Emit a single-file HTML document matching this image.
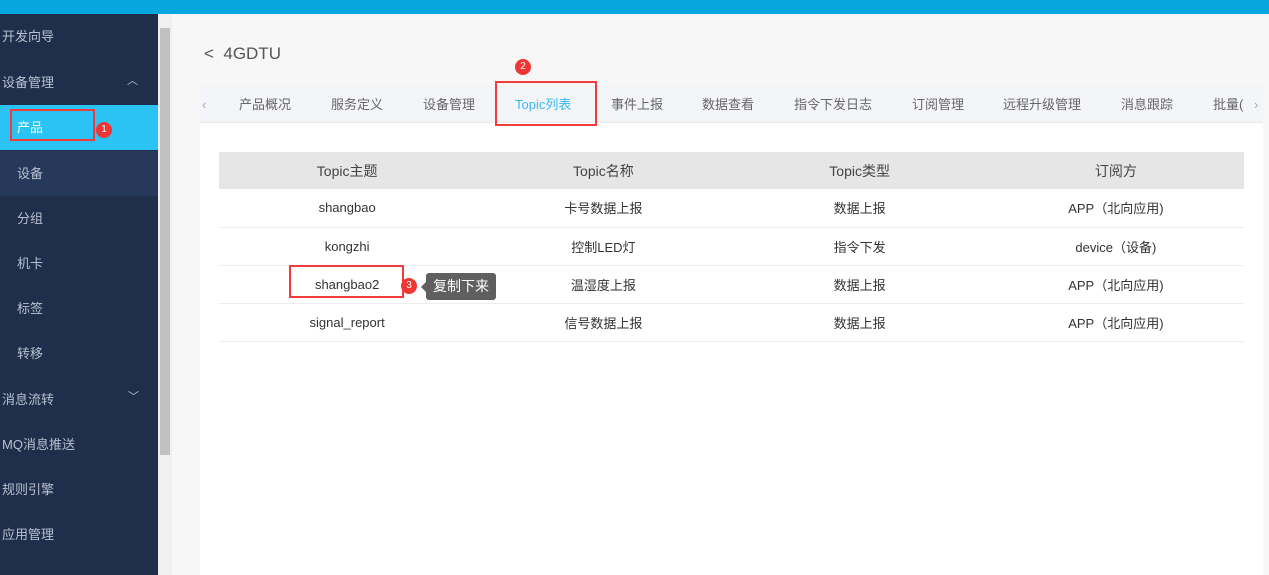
<!DOCTYPE html>
<html><head><meta charset="utf-8"><style>
*{margin:0;padding:0;box-sizing:border-box}
body{width:1269px;height:575px;overflow:hidden;background:#f7f7f7;font-family:"Liberation Sans","Noto Sans CJK SC",sans-serif;position:relative}
.top{position:absolute;left:0;top:0;width:1269px;height:14px;background:#05a7de}
.side{position:absolute;left:0;top:14px;width:158px;height:561px;background:#1f2e4a}
.it{position:absolute;left:0;width:158px;height:45px;line-height:45px;font-size:13px;color:#b7c0cf;padding-left:2px}
.sub{padding-left:17px}
.sb{position:absolute;left:158px;top:14px;width:14px;height:561px;background:#f0f0f0}
.thumb{position:absolute;left:160px;top:28px;width:10px;height:427px;background:#c1c1c1}
.red{position:absolute;border:2px solid #f23b3b}
.badge{position:absolute;width:16px;height:16px;border-radius:8px;background:#f03535;color:#fff;font-size:10px;text-align:center;line-height:16px}
.tabs{position:absolute;left:200px;top:86px;width:1063px;height:37px;background:#f4f5f8;border-bottom:1px solid #e8eaee}
.tab{position:absolute;top:0;line-height:37px;font-size:13px;color:#666}
.panel{position:absolute;left:200px;top:123px;width:1063px;height:452px;background:#fff}
table{position:absolute;left:219px;top:152px;width:1025px;border-collapse:collapse;font-size:13px;color:#333;table-layout:fixed}
th{background:#e6e6e6;height:37px;font-weight:normal;font-size:14px;color:#444;width:256px}
td{height:38px;text-align:center;border-bottom:1px solid #ececec}
</style></head><body>
<div class="top"></div>
<div class="side">
<div class="it" style="top:0">开发向导</div>
<div class="it" style="top:46px">设备管理<span style="position:absolute;left:127px;top:-1px;font-size:11px">︿</span></div>
<div class="it sub" style="top:91px;background:#2bc3f3;color:#fff">产品</div>
<div class="it sub" style="top:137px;background:#26395b">设备</div>
<div class="it sub" style="top:182px">分组</div>
<div class="it sub" style="top:227px">机卡</div>
<div class="it sub" style="top:272px">标签</div>
<div class="it sub" style="top:317px">转移</div>
<div class="it" style="top:363px">消息流转<span style="position:absolute;left:128px;top:-2px;font-size:11px">﹀</span></div>
<div class="it" style="top:408px">MQ消息推送</div>
<div class="it" style="top:453px">规则引擎</div>
<div class="it" style="top:498px">应用管理</div>
</div>
<div class="red" style="left:10px;top:109px;width:85px;height:32px"></div>
<div class="badge" style="left:96px;top:122px">1</div>
<div class="sb"></div><div class="thumb"></div>
<div style="position:absolute;left:204px;top:44px;font-size:17px;color:#555">&lt;&nbsp; 4GDTU</div>
<div class="tabs">
<div class="tab" style="left:2px;color:#aaa">‹</div>
<div class="tab" style="left:39px">产品概况</div>
<div class="tab" style="left:131px">服务定义</div>
<div class="tab" style="left:223px">设备管理</div>
<div class="tab" style="left:315px;color:#3ab8ef">Topic列表</div>
<div class="tab" style="left:411px">事件上报</div>
<div class="tab" style="left:502px">数据查看</div>
<div class="tab" style="left:594px">指令下发日志</div>
<div class="tab" style="left:712px">订阅管理</div>
<div class="tab" style="left:803px">远程升级管理</div>
<div class="tab" style="left:921px">消息跟踪</div>
<div class="tab" style="left:1013px">批量(</div>
<div class="tab" style="left:1054px;color:#aaa">›</div>
</div>
<div class="panel"></div>
<div class="red" style="left:495px;top:81px;width:102px;height:45px"></div>
<div class="badge" style="left:515px;top:59px">2</div>
<table>
<tr><th>Topic主题</th><th>Topic名称</th><th>Topic类型</th><th>订阅方</th></tr>
<tr><td>shangbao</td><td>卡号数据上报</td><td>数据上报</td><td>APP（北向应用)</td></tr>
<tr><td>kongzhi</td><td>控制LED灯</td><td>指令下发</td><td>device（设备)</td></tr>
<tr><td>shangbao2</td><td>温湿度上报</td><td>数据上报</td><td>APP（北向应用)</td></tr>
<tr><td>signal_report</td><td>信号数据上报</td><td>数据上报</td><td>APP（北向应用)</td></tr>
</table>
<div class="red" style="left:289px;top:265px;width:115px;height:33px"></div>
<div class="badge" style="left:401px;top:278px">3</div>
<div style="position:absolute;left:421px;top:282px;width:0;height:0;border:5px solid transparent;border-right-color:#5f5f5f;border-left:0"></div>
<div style="position:absolute;left:426px;top:273px;width:70px;height:27px;background:#5f5f5f;border-radius:3px;color:#fff;font-size:14px;line-height:27px;text-align:center">复制下来</div>
</body></html>
